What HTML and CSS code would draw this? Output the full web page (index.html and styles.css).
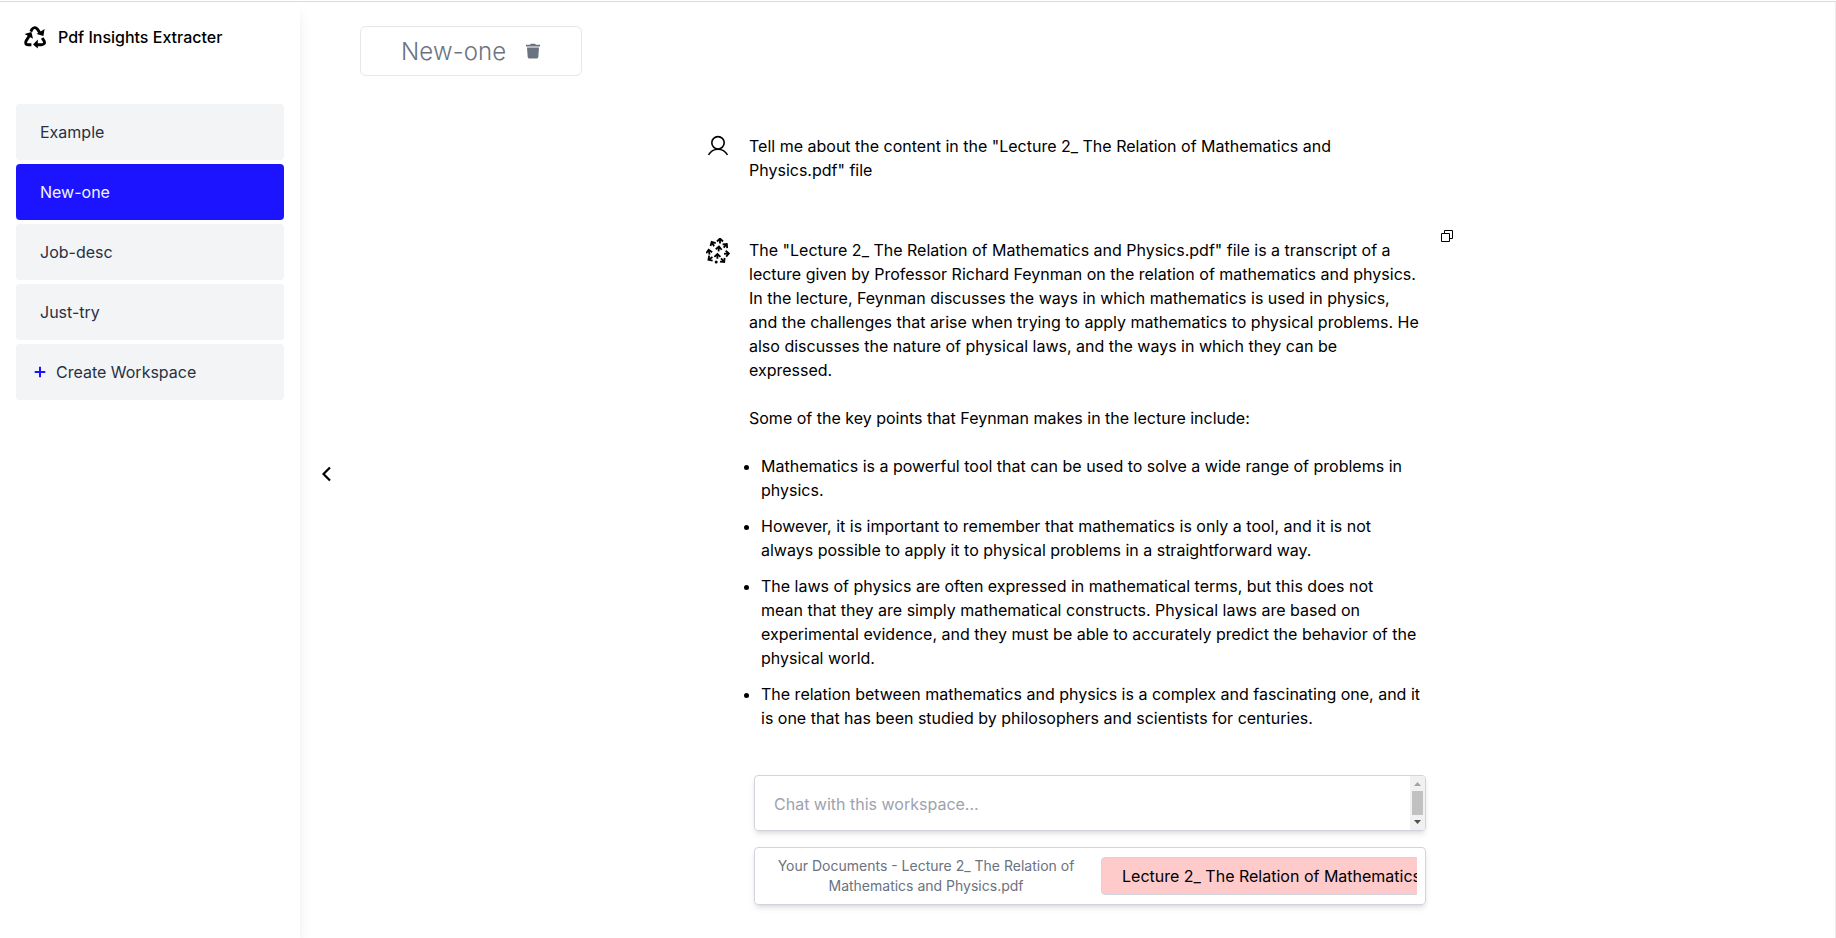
FILE: index.html
```html
<!DOCTYPE html>
<html lang="en">
<head>
<meta charset="utf-8">
<title>Pdf Insights Extracter</title>
<link rel="stylesheet" href="styles.css">
</head>
<body>
<div class="app">
  <aside class="sidebar">
    <div class="brand">
      <svg class="brand-icon" viewBox="0 0 24 24" width="24" height="24">
        <g fill="none" stroke="#000" stroke-width="2.9">
          <path d="M7.8 6.6 8.8 4.6Q11.6 .8 14.6 4.4L16.8 7.8"/>
          <path d="M6.2 11 3.2 15.6Q1.4 19.4 5.2 19.8H8.4"/>
          <path d="M14 19.8H18.2Q22.6 19.2 21.2 16.2L19.2 13"/>
        </g>
        <path d="M13.6 9 20.4 10.9 21.6 4ZM1.6 9 8.4 7 10 13.8ZM14.8 14.6V23.4L10 19.4Z"/>
      </svg>
      <span class="brand-name">Pdf Insights Extracter</span>
    </div>
    <nav class="workspaces">
      <a class="workspace">Example</a>
      <a class="workspace workspace-active">New-one</a>
      <a class="workspace">Job-desc</a>
      <a class="workspace">Just-try</a>
      <a class="workspace workspace-create">
        <svg viewBox="0 0 16 16" width="16" height="16"><path d="M8 2.7v10.6M2.7 8h10.6" stroke="#1c14ff" stroke-width="2"/></svg>
        <span>Create Workspace</span>
      </a>
    </nav>
  </aside>
  <div class="toggle">
    <svg viewBox="0 0 12 18" width="12" height="18"><path d="M9 2.5 2.5 9 9 15.5" fill="none" stroke="#000" stroke-width="2.2"/></svg>
  </div>
  <main class="main">
    <header class="title-card">
      <span class="title">New-one</span>
      <svg viewBox="0 0 14 16" width="14" height="16" fill="#6b7280"><path d="M0 1.7H4L5 .8h4l1 .9h4v1.8H0zM1 4.5h12l-.7 9.6q-.1 1.4-1.4 1.4H3.1q-1.3 0-1.4-1.4z"/></svg>
    </header>
    <section class="chat">
      <div class="message message-user">
        <svg class="avatar" viewBox="0 0 24 24" width="24" height="24" fill="none" stroke="#000" stroke-width="1.6"><circle cx="12" cy="8.8" r="6.2"/><path d="M2.5 20.8C7 13.3 17 13.3 21.5 20.8"/></svg>
        <p class="message-text">Tell me about the content in the "Lecture 2_ The Relation of Mathematics and<br>Physics.pdf" file</p>
      </div>
      <div class="message message-bot">
        <svg class="avatar" viewBox="0 0 24 28" width="24" height="28">
          <defs><path id="arrow" d="M0 3V-1.6M-3 1.1 0-1.9 3 1.1" fill="none" stroke="#000" stroke-width="1.8"/></defs>
          <use href="#arrow" transform="translate(14 2.4)"/>
          <use href="#arrow" transform="translate(6.6 5.6) rotate(-30)"/>
          <use href="#arrow" transform="translate(19.6 7.4) rotate(40)"/>
          <use href="#arrow" transform="translate(12.8 10.4) rotate(5)"/>
          <use href="#arrow" transform="translate(3 13.6) rotate(-10)"/>
          <use href="#arrow" transform="translate(21 15.6) rotate(85)"/>
          <use href="#arrow" transform="translate(11.4 17.8)"/>
          <use href="#arrow" transform="translate(4 20.8) rotate(-125)"/>
          <use href="#arrow" transform="translate(17 22.6) rotate(140)"/>
          <circle cx="10.2" cy="24" r="1.5"/>
        </svg>
        <div class="message-text">
          <p>The "Lecture 2_ The Relation of Mathematics and Physics.pdf" file is a transcript of a<br>lecture given by Professor Richard Feynman on the relation of mathematics and physics.<br>In the lecture, Feynman discusses the ways in which mathematics is used in physics,<br>and the challenges that arise when trying to apply mathematics to physical problems. He<br>also discusses the nature of physical laws, and the ways in which they can be<br>expressed.</p>
          <p>Some of the key points that Feynman makes in the lecture include:</p>
          <ul class="points">
            <li>Mathematics is a powerful tool that can be used to solve a wide range of problems in<br>physics.</li>
            <li>However, it is important to remember that mathematics is only a tool, and it is not<br>always possible to apply it to physical problems in a straightforward way.</li>
            <li>The laws of physics are often expressed in mathematical terms, but this does not<br>mean that they are simply mathematical constructs. Physical laws are based on<br>experimental evidence, and they must be able to accurately predict the behavior of the<br>physical world.</li>
            <li>The relation between mathematics and physics is a complex and fascinating one, and it<br>is one that has been studied by philosophers and scientists for centuries.</li>
          </ul>
        </div>
        <svg class="copy" viewBox="0 0 12 12" width="12" height="12" fill="none" stroke="#000"><path d="M.5 3.5h8v8h-8zM3.5 3.5v-3h8v8h-3"/></svg>
      </div>
    </section>
    <div class="composer">
      <div class="input-box">
        <span class="placeholder">Chat with this workspace...</span>
        <div class="scrollbar">
          <svg viewBox="0 0 7 4" width="7" height="4" fill="#a3a3a3"><path d="M0 4 3.5 0 7 4z"/></svg>
          <div class="thumb"></div>
          <svg viewBox="0 0 7 4" width="7" height="4" fill="#505050"><path d="M0 0 3.5 4 7 0z"/></svg>
        </div>
      </div>
      <div class="documents">
        <p class="documents-label">Your Documents - Lecture 2_ The Relation of<br>Mathematics and Physics.pdf</p>
        <div class="documents-scroll"><div class="document">Lecture 2_ The Relation of Mathematics and Physics.pdf</div></div>
      </div>
    </div>
  </main>
</div>
</body>
</html>
```
FILE: styles.css
```css
* { box-sizing: border-box; }
body {
  margin: 0;
  font: 16px/24px Inter, sans-serif;
  color: #000;
  background: #fff;
}
p, ul { margin: 0; }
svg { display: block; flex: none; }
.app {
  display: flex;
  height: 938px;
  overflow: hidden;
  padding-top: 2px;
  background: linear-gradient(#dadada, #dadada) 0 1px / 100% 1px no-repeat;
}
.sidebar {
  width: 300px;
  flex: none;
  padding: 22px 16px;
  box-shadow: 0 10px 15px -3px rgba(0, 0, 0, .1), 0 4px 6px -4px rgba(0, 0, 0, .1);
}
.brand { display: flex; align-items: center; gap: 11px; padding-left: 7px; height: 26px; }
.brand-name { font-weight: 500; }
.workspaces { display: flex; flex-direction: column; gap: 4px; margin-top: 54px; }
.workspace {
  display: flex;
  align-items: center;
  height: 56px;
  padding-left: 24px;
  border-radius: 4px;
  background: #f3f4f6;
  color: #273142;
}
.workspace-active { background: #1c14ff; color: #f3f4f6; }
.workspace-create { padding-left: 16px; gap: 8px; }
.toggle { width: 60px; flex: none; padding: 463px 0 0 21px; }
.main { flex: 1; padding-top: 24px; border-right: 1px solid #ececec; }
.title-card {
  width: 222px;
  height: 50px;
  border: 1px solid #e5e7eb;
  border-radius: 6px;
  display: flex;
  align-items: center;
  padding-left: 40px;
  color: #6b7280;
}
.title { width: 125px; padding-top: 1px; font-size: 24px; font-weight: 300; letter-spacing: .15px; line-height: 32px; }
.chat { padding: 58px 0 0 346px; }
.message { display: flex; gap: 19px; white-space: nowrap; }
.message-text { width: 681px; }
.message-text p + p, .message-text .points { margin-top: 24px; }
.message-bot { margin-top: 56px; }
.points { padding-left: 12px; display: flex; flex-direction: column; gap: 12px; }
.copy { margin: -8px 0 0 -8px; }
.composer { width: 672px; margin: 45px 0 0 394px; display: flex; flex-direction: column; gap: 16px; }
.input-box, .documents {
  border: 1px solid #d1d5db;
  border-radius: 4px;
  box-shadow: 0 4px 6px -1px rgba(0, 0, 0, .1), 0 2px 4px -2px rgba(0, 0, 0, .1);
  display: flex;
}
.input-box { height: 56px; padding-left: 19px; align-items: center; justify-content: space-between; overflow: hidden; }
.placeholder { color: #9ca3af; padding-top: 2px; }
.scrollbar {
  width: 15px;
  height: 54px;
  background: #f1f1f1;
  display: flex;
  flex-direction: column;
  align-items: center;
  padding: 6px 0;
}
.thumb { width: 11px; height: 24px; background: #c1c1c1; margin: 5px 0; }
.documents { height: 58px; padding: 8px; }
.documents-label { width: 326px; font-size: 14px; line-height: 20px; color: #6b7280; text-align: center; white-space: nowrap; }
.documents-scroll { width: 316px; margin-left: 12px; overflow: hidden; }
.document {
  width: 480px;
  height: 38px;
  margin-top: 1px;
  padding: 6px 20px;
  border: 1px solid #d1d5db;
  border-radius: 4px;
  background: #fecaca;
  white-space: nowrap;
}
```
